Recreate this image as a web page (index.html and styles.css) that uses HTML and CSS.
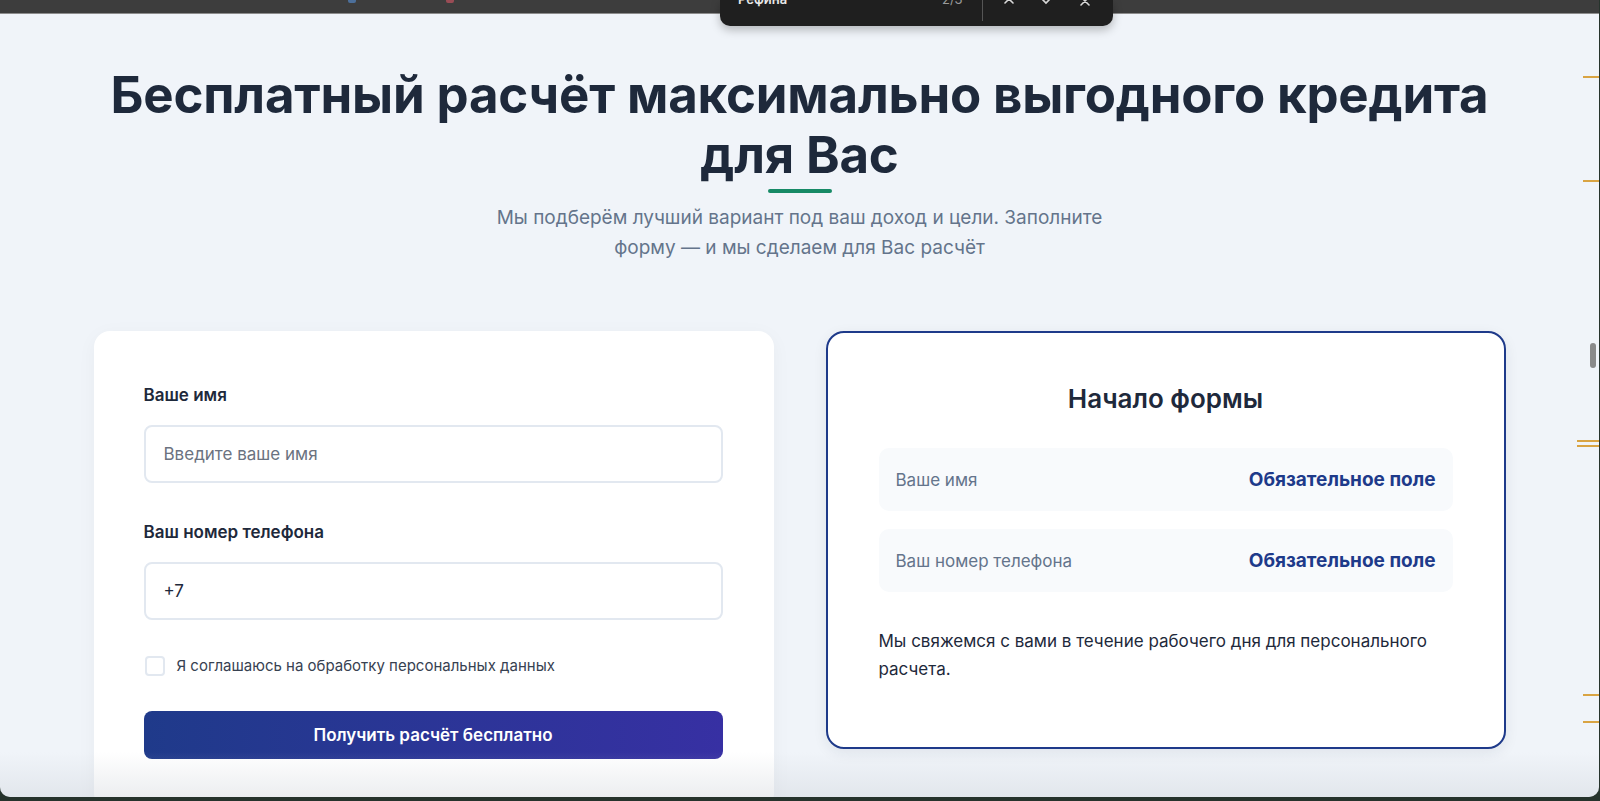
FILE: index.html
```html
<!DOCTYPE html>
<html lang="ru">
<head>
<meta charset="utf-8">
<title>Бесплатный расчёт кредита</title>
<link rel="stylesheet" href="styles.css">
</head>
<body>
<div class="window">
  <div class="topbar">
    <span class="tab-dot tab-dot--blue"></span>
    <span class="tab-dot tab-dot--red"></span>
  </div>

  <main class="page">
    <header class="hero">
      <h1 class="hero__title">Бесплатный расчёт максимально выгодного кредита для Вас</h1>
      <div class="hero__line"></div>
      <p class="hero__text">Мы подберём лучший вариант под ваш доход и цели. Заполните форму — и мы сделаем для Вас расчёт</p>
    </header>

    <section class="cards">
      <form class="card card--form">
        <label class="field__label" for="name">Ваше имя</label>
        <input class="field__input" id="name" type="text" placeholder="Введите ваше имя">

        <label class="field__label" for="phone">Ваш номер телефона</label>
        <input class="field__input field__input--value" id="phone" type="text" value="+7">

        <label class="agree">
          <span class="agree__box"></span>
          <span class="agree__text">Я соглашаюсь на обработку персональных данных</span>
        </label>

        <button class="submit" type="button">Получить расчёт бесплатно</button>
      </form>

      <aside class="card card--summary">
        <h2 class="summary__title">Начало формы</h2>
        <div class="summary__row">
          <span class="summary__name">Ваше имя</span>
          <span class="summary__value">Обязательное поле</span>
        </div>
        <div class="summary__row">
          <span class="summary__name">Ваш номер телефона</span>
          <span class="summary__value">Обязательное поле</span>
        </div>
        <p class="summary__note">Мы свяжемся с вами в течение рабочего дня для персонального расчета.</p>
      </aside>
    </section>
  </main>

  <div class="findbar">
    <span class="findbar__query">Рефина</span>
    <span class="findbar__count">2/3</span>
    <span class="findbar__divider"></span>
    <svg class="findbar__icon findbar__icon--up" width="14" height="14" viewBox="0 0 14 14"><path d="M3 9 L7 5 L11 9" fill="none" stroke="#d8d8d8" stroke-width="1.6" stroke-linecap="round"/></svg>
    <svg class="findbar__icon findbar__icon--down" width="14" height="14" viewBox="0 0 14 14"><path d="M3 5 L7 9 L11 5" fill="none" stroke="#d8d8d8" stroke-width="1.6" stroke-linecap="round"/></svg>
    <svg class="findbar__icon findbar__icon--close" width="14" height="14" viewBox="0 0 14 14"><path d="M3 3 L11 11 M11 3 L3 11" fill="none" stroke="#d8d8d8" stroke-width="1.6" stroke-linecap="round"/></svg>
  </div>

  <div class="scroll-thumb"></div>
  <div class="edge-marks">
    <span class="edge-mark edge-mark--1"></span>
    <span class="edge-mark edge-mark--2"></span>
    <span class="edge-mark edge-mark--3"></span>
    <span class="edge-mark edge-mark--4"></span>
    <span class="edge-mark edge-mark--5"></span>
    <span class="edge-mark edge-mark--6"></span>
  </div>
  <div class="bottom-fade"></div>
</div>
</body>
</html>
```

FILE: styles.css
```css
* { box-sizing: border-box; }

html, body {
  margin: 0;
  padding: 0;
  height: 801px;
  overflow: hidden;
}

body {
  background: #26332c;
  font-family: Inter, "Noto Sans", "Liberation Sans", sans-serif;
  color: #1e293b;
}

.window {
  position: relative;
  width: 1599px;
  height: 797px;
  background: #f0f4f9;
  border-radius: 0 0 10px 10px;
  overflow: hidden;
}

.topbar {
  position: relative;
  height: 14px;
  background: #3d3d3d;
  border-bottom: 1px solid #8c8c8c;
}

.tab-dot {
  position: absolute;
  top: 0;
  width: 8px;
  height: 3px;
  border-radius: 0 0 2px 2px;
}
.tab-dot--blue { left: 348px; background: #4c6f9a; }
.tab-dot--red { left: 446px; background: #9a4c55; }

.page {
  display: flex;
  flex-direction: column;
  align-items: center;
}

.hero {
  display: flex;
  flex-direction: column;
  align-items: center;
  padding-top: 51px;
  width: 1412px;
}

.hero__title {
  margin: 0;
  font-size: 51px;
  line-height: 60px;
  font-weight: 700;
  letter-spacing: -0.2px;
  text-align: center;
  color: #1e293b;
}

.hero__line {
  width: 64px;
  height: 4px;
  border-radius: 2px;
  background: #178a66;
  margin-top: 4px;
}

.hero__text {
  margin: 10px 0 0;
  max-width: 640px;
  font-size: 19px;
  line-height: 30px;
  color: #64748b;
  text-align: center;
}

.cards {
  display: grid;
  grid-template-columns: 680px 680px;
  column-gap: 52px;
  align-items: start;
  margin-top: 68px;
}

.card {
  background: #ffffff;
  border-radius: 16px;
}

.card--form {
  display: flex;
  flex-direction: column;
  padding: 52px 51px 50px 50px;
  box-shadow: 0 4px 20px rgba(30, 41, 59, 0.04);
}

.field__label {
  font-size: 17px;
  line-height: 24px;
  font-weight: 600;
  color: #1e293b;
  margin-bottom: 18px;
}

.field__input {
  height: 58px;
  width: 100%;
  border: 2px solid #e2e8f0;
  border-radius: 8px;
  padding: 0 18px;
  font-family: inherit;
  font-size: 17px;
  color: #1e293b;
  background: #fff;
  margin-bottom: 37px;
  outline: none;
}
.field__input::placeholder { color: #6b7280; }
.field__input--value { margin-bottom: 36px; }

.agree {
  display: flex;
  align-items: center;
  gap: 12px;
  margin-left: 1px;
}

.agree__box {
  width: 20px;
  height: 20px;
  border: 2px solid #e2e8f0;
  border-radius: 4px;
  background: #fff;
}

.agree__text {
  font-size: 15px;
  line-height: 20px;
  color: #374151;
}

.submit {
  margin-top: 35px;
  height: 48px;
  width: 100%;
  border: none;
  border-radius: 8px;
  background: linear-gradient(90deg, #1f3a8a 0%, #3730a3 100%);
  color: #fff;
  font-family: inherit;
  font-size: 17px;
  font-weight: 600;
}

.card--summary {
  border: 2px solid #1e3a8a;
  border-radius: 18px;
  padding: 50px 51px 64px 51px;
  box-shadow: 0 4px 14px rgba(30, 41, 59, 0.08);
}

.summary__title {
  margin: 0 0 33px;
  text-align: center;
  font-size: 26px;
  line-height: 32px;
  font-weight: 600;
  color: #1e293b;
}

.summary__row {
  display: flex;
  justify-content: space-between;
  align-items: center;
  height: 63px;
  padding: 0 17px;
  background: #f8fafc;
  border-radius: 10px;
  margin-bottom: 18px;
}
.summary__row + .summary__row { margin-bottom: 0; }

.summary__name {
  font-size: 17px;
  color: #64748b;
}

.summary__value {
  font-size: 19px;
  font-weight: 700;
  color: #1e3a8a;
}

.summary__note {
  margin: 35px 0 0;
  font-size: 17px;
  line-height: 28px;
  color: #1e293b;
}

/* browser overlay: find bar */
.findbar {
  position: absolute;
  left: 720px;
  top: 0;
  width: 393px;
  height: 26px;
  background: #1f1f1f;
  border-radius: 0 0 10px 10px;
  box-shadow: 0 4px 10px rgba(0, 0, 0, 0.25);
  overflow: hidden;
}

.findbar__query {
  position: absolute;
  left: 18px;
  top: -9px;
  font-size: 13px;
  font-weight: 600;
  color: #e8e8e8;
}

.findbar__count {
  position: absolute;
  left: 222px;
  top: -9px;
  font-size: 13px;
  color: #9a9a9a;
}

.findbar__divider {
  position: absolute;
  left: 262px;
  top: 0;
  width: 1px;
  height: 21px;
  background: #555;
}

.findbar__icon { position: absolute; top: -6px; }
.findbar__icon--up { left: 282px; }
.findbar__icon--down { left: 319px; }
.findbar__icon--close { left: 358px; }

.scroll-thumb {
  position: absolute;
  left: 1590px;
  top: 343px;
  width: 6px;
  height: 25px;
  border-radius: 3px;
  background: #8a8a8a;
}

.edge-mark {
  position: absolute;
  left: 1583px;
  width: 18px;
  height: 2px;
  background: #d9a443;
}
.edge-mark--1 { top: 76px; }
.edge-mark--2 { top: 180px; }
.edge-mark--3 { top: 440px; left: 1577px; width: 24px; }
.edge-mark--4 { top: 445px; left: 1577px; width: 24px; }
.edge-mark--5 { top: 694px; }
.edge-mark--6 { top: 721px; }

.bottom-fade {
  position: absolute;
  left: 0;
  right: 0;
  bottom: 0;
  height: 45px;
  background: linear-gradient(180deg, rgba(200, 205, 212, 0) 0%, rgba(200, 205, 212, 0.35) 100%);
  pointer-events: none;
}
```
